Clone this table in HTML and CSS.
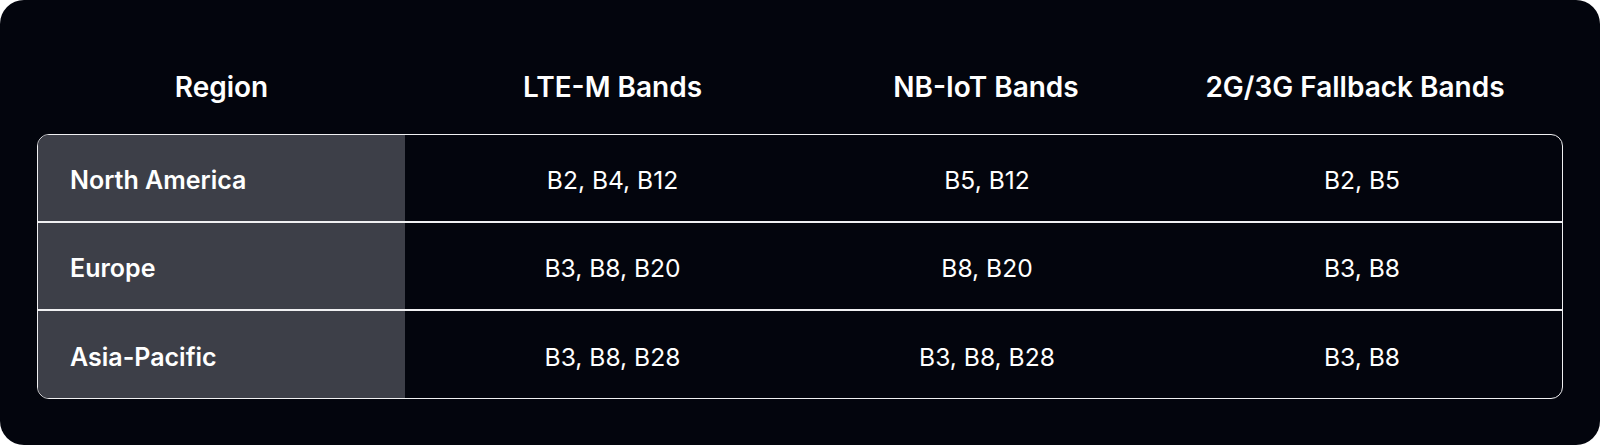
FILE: index.html
```html
<!DOCTYPE html>
<html lang="en">
<head>
<meta charset="utf-8">
<title>Regional band support</title>
<link rel="stylesheet" href="styles.css">
</head>
<body>
<div class="card">
  <div class="grid head">
    <div class="th">Region</div>
    <div class="th">LTE-M Bands</div>
    <div class="th th-3">NB-IoT Bands</div>
    <div class="th th-4">2G/3G Fallback Bands</div>
  </div>
  <div class="table">
    <div class="grid row">
      <div class="cell label">North America</div>
      <div class="cell">B2, B4, B12</div>
      <div class="cell">B5, B12</div>
      <div class="cell c-4">B2, B5</div>
    </div>
    <div class="grid row">
      <div class="cell label">Europe</div>
      <div class="cell">B3, B8, B20</div>
      <div class="cell">B8, B20</div>
      <div class="cell c-4">B3, B8</div>
    </div>
    <div class="grid row">
      <div class="cell label">Asia-Pacific</div>
      <div class="cell">B3, B8, B28</div>
      <div class="cell">B3, B8, B28</div>
      <div class="cell c-4">B3, B8</div>
    </div>
  </div>
</div>
</body>
</html>
```

FILE: styles.css
```css
* { box-sizing: border-box; }
html, body { margin: 0; padding: 0; background: #ffffff; }
body { font-family: Inter, "Noto Sans", "Liberation Sans", sans-serif; color: #ffffff; }

.card {
  width: 1600px;
  height: 445px;
  background: #03050d;
  border-radius: 24px;
  padding: 40px 37px 0 37px;
}

.grid {
  display: grid;
  grid-template-columns: 367px 415px 334px 408px;
}

.head {
  height: 94px;
  padding: 0 1px;
  align-items: center;
}
.th {
  font-size: 28px;
  font-weight: 600;
  text-align: center;
  line-height: 34px;
}
.th-3 { padding-right: 2px; }
.th-4 { padding-right: 6px; }

.table {
  border: 1px solid #f0f0f2;
  border-radius: 12px;
  overflow: hidden;
}
.row { height: 86px; }
.row + .row { border-top: 2px solid #f0f0f2; height: 88px; }
.row:last-child { height: 89px; }

.cell {
  display: flex;
  align-items: center;
  justify-content: center;
  padding-top: 4px;
  font-size: 24.6px;
  font-weight: 400;
}
.cell.label {
  justify-content: flex-start;
  background: #3d3f48;
  padding-left: 32px;
  font-size: 25px;
  font-weight: 600;
}
.c-4 { padding-left: 8px; }
```
